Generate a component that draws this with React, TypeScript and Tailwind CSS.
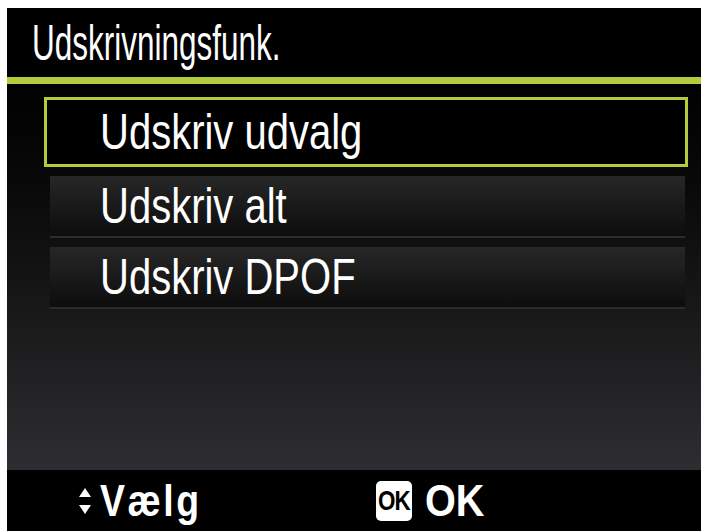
const sans = "font-['Liberation_Sans',Arial,sans-serif]";

function UpDown() {
  return (
    <svg width="14" height="42" viewBox="0 0 14 42" className="shrink-0">
      <path d="M7 8 L13 17 L1 17 Z" fill="#fff" />
      <path d="M7 34 L13 25 L1 25 Z" fill="#fff" />
    </svg>
  );
}

function Label({ text }: { text: string }) {
  return (
    <span className={`${sans} inline-block origin-left scale-x-[0.8] text-[50px] leading-none whitespace-nowrap text-white`}>
      {text}
    </span>
  );
}

function Row({ label, selected }: { label: string; selected?: boolean }) {
  if (selected) {
    return (
      <div className="flex h-[70px] items-center border-[3px] border-[#b3cc3c] bg-black pl-[53px]">
        <Label text={label} />
      </div>
    );
  }
  return (
    <div className="ml-[6px] mr-[3px] flex h-[62px] items-center border-b-2 border-[#2c2c2c] bg-gradient-to-b from-[#272727] to-[#0d0d0d] pl-[50px]">
      <Label text={label} />
    </div>
  );
}

export default function App() {
  return (
    <div className="h-[531px] w-[701px] overflow-hidden bg-white pl-[7px] pt-[8px]">
      <div className="flex h-full flex-col bg-black">
        <div className="flex h-[69px] items-center pl-[25px]">
          <span className={`${sans} inline-block origin-left scale-x-[0.63] text-[50px] leading-none whitespace-nowrap text-white`}>
            Udskrivningsfunk.
          </span>
        </div>
        <div className="h-[7px] bg-[#b3cc3c]" />
        <div className="flex flex-1 flex-col gap-[9px] bg-gradient-to-b from-[#020202] via-[#141414] to-[#2e2e32] pb-4 pl-[37px] pr-[13px] pt-[13px]">
          <Row label="Udskriv udvalg" selected />
          <Row label="Udskriv alt" />
          <Row label="Udskriv DPOF" />
        </div>
        <div className={`${sans} flex h-[61px] items-center bg-black pl-[71px] font-bold leading-none text-white`}>
          <UpDown />
          <div className="ml-[8px] w-[276px]">
            <span className="inline-block origin-left scale-x-[0.85] text-[44px] tracking-[3px]">Vælg</span>
          </div>
          <div className="flex h-[40px] w-[36px] items-center justify-center rounded-[5px] bg-white text-black">
            <span className="inline-block scale-x-[0.8] text-[28px] tracking-[-1px]">OK</span>
          </div>
          <span className="ml-[13px] inline-block origin-left scale-x-[0.9] text-[44px]">OK</span>
        </div>
      </div>
    </div>
  );
}
